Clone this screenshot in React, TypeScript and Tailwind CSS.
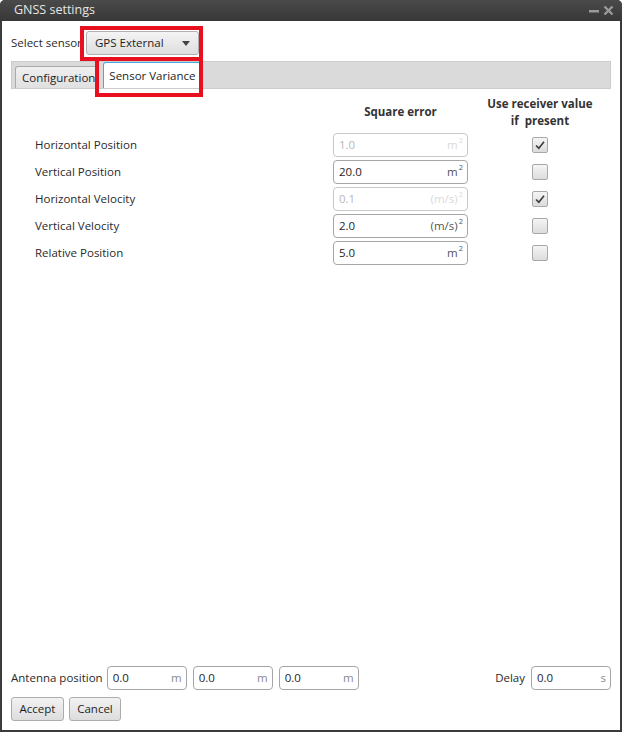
import React from "react";

type Unit = "m2" | "ms2" | "m" | "s";

interface SensorRow {
  label: string;
  value: string;
  unit: Unit;
  useReceiver: boolean;
}

const rows: SensorRow[] = [
  { label: "Horizontal Position", value: "1.0", unit: "m2", useReceiver: true },
  { label: "Vertical Position", value: "20.0", unit: "m2", useReceiver: false },
  { label: "Horizontal Velocity", value: "0.1", unit: "ms2", useReceiver: true },
  { label: "Vertical Velocity", value: "2.0", unit: "ms2", useReceiver: false },
  { label: "Relative Position", value: "5.0", unit: "m2", useReceiver: false },
];

// 单位显示，平方用上标
const UnitLabel = ({ unit }: { unit: Unit }) => {
  if (unit === "m" || unit === "s") return <span>{unit}</span>;
  return (
    <span className="flex items-start">
      <span>{unit === "m2" ? "m" : "(m/s)"}</span>
      <span className="text-[7.5px] leading-none mt-[1px] ml-[1px]">2</span>
    </span>
  );
};

const NumberField = ({
  value,
  unit,
  disabled = false,
  width = "w-[135px]",
}: {
  value: string;
  unit: Unit;
  disabled?: boolean;
  width?: string;
}) => (
  <div
    className={`${width} h-[24px] flex items-center justify-between pl-[5px] pr-[4px] rounded-[4px] border bg-white ${
      disabled ? "border-[#c9c9c9]" : "border-[#a6a6a6]"
    }`}
  >
    <span className={disabled ? "text-[#b8b8b8]" : "text-[#1e1e1e]"}>{value}</span>
    <span className={disabled ? "text-[#dadada]" : unit === "m" || unit === "s" ? "text-[#8a8a8a]" : "text-[#555]"}>
      <UnitLabel unit={unit} />
    </span>
  </div>
);

const CheckBox = ({ checked }: { checked: boolean }) => (
  <div className="w-[16px] h-[16px] rounded-[2px] border border-[#a8a8a8] bg-gradient-to-b from-[#f5f5f5] to-[#dcdcdc] flex items-center justify-center">
    {checked && (
      <svg width="12" height="12" viewBox="0 0 12 12">
        <polyline points="2,6.5 4.8,9.2 10,2.8" fill="none" stroke="#3c3c3c" strokeWidth="1.6" />
      </svg>
    )}
  </div>
);

const Button = ({ children, width }: { children: React.ReactNode; width: string }) => (
  <button
    className={`${width} h-[24px] rounded-[3px] border border-[#acacac] bg-gradient-to-b from-[#f2f2f2] to-[#dddddd] text-[#1e1e1e] flex items-center justify-center`}
  >
    {children}
  </button>
);

export default function App() {
  return (
    <div
      className="w-[622px] h-[732px] flex flex-col bg-[#3b3b3b] rounded-t-[5px] text-[11.5px] text-[#2a2a2a]"
      style={{ fontFamily: '"Open Sans", "Noto Sans", sans-serif' }}
    >
      {/* 标题栏 */}
      <div className="h-[21px] flex items-center justify-between pl-[14px] pr-[8px] bg-gradient-to-b from-[#4a4a4a] to-[#383838] rounded-t-[5px]">
        <span className="text-[12.5px] text-[#e6e6e6]">GNSS settings</span>
        <div className="flex items-center gap-[4px] text-[#9a9a9a]">
          <svg width="10" height="10" viewBox="0 0 10 10">
            <rect x="0" y="4" width="10" height="2.5" fill="currentColor" />
          </svg>
          <svg width="11" height="11" viewBox="0 0 11 11">
            <path d="M1.5 1.5 L9.5 9.5 M9.5 1.5 L1.5 9.5" stroke="currentColor" strokeWidth="2.4" />
          </svg>
        </div>
      </div>

      {/* 窗口内容 */}
      <div className="flex-1 flex flex-col bg-white mx-[2px] mb-[2px] pl-[9px] pr-[9px] relative">
        {/* 传感器选择 */}
        <div className="flex items-center mt-[10px] h-[24px]">
          <span className="w-[75px]">Select sensor</span>
          <div className="w-[113px] h-[24px] rounded-[3px] border border-[#b0b0b0] bg-gradient-to-b from-[#f4f4f4] to-[#dedede] flex items-center justify-between pl-[8px] pr-[8px]">
            <span className="text-[#1e1e1e]">GPS External</span>
            <svg width="8" height="5" viewBox="0 0 8 5">
              <polygon points="0,0 8,0 4,5" fill="#444" />
            </svg>
          </div>
        </div>

        {/* 标签页 */}
        <div className="mt-[6px] h-[28px] bg-[#dadada] border border-[#cccccc] flex items-end pl-[3px] gap-[4px]">
          <div className="h-[22px] pl-[6px] pr-[3px] flex items-center rounded-t-[3px] border border-b-0 border-[#ababab] bg-gradient-to-b from-[#f0f0f0] to-[#e0e0e0] text-[#1e1e1e]">
            Configuration
          </div>
          <div className="h-[26px] px-[5px] flex items-center rounded-t-[3px] border border-b-0 border-[#49a6e0] bg-white text-[#1e1e1e]">
            Sensor Variance
          </div>
        </div>

        {/* 方差表格 */}
        <div className="ml-[24px] mt-[6px] grid grid-cols-[298px_135px_144px]">
          <div />
          <div className="h-[34px] flex items-center justify-center font-bold text-[#333]">Square error</div>
          <div className="h-[34px] flex flex-col items-center justify-center font-bold text-[#333] leading-[17px]">
            <span>Use receiver value</span>
            <span>if&nbsp; present</span>
          </div>
        </div>
        <div className="ml-[24px] mt-[4px] flex flex-col gap-[3px]">
          {rows.map((row) => (
            <div key={row.label} className="grid grid-cols-[298px_135px_144px] h-[24px] items-center">
              <span>{row.label}</span>
              <NumberField value={row.value} unit={row.unit} disabled={row.useReceiver} />
              <div className="flex justify-center">
                <CheckBox checked={row.useReceiver} />
              </div>
            </div>
          ))}
        </div>

        <div className="flex-1" />

        {/* 天线位置与延迟 */}
        <div className="flex items-center h-[24px]">
          <span className="mr-[4px]">Antenna position</span>
          <div className="flex gap-[6px]">
            <NumberField value="0.0" unit="m" width="w-[80px]" />
            <NumberField value="0.0" unit="m" width="w-[80px]" />
            <NumberField value="0.0" unit="m" width="w-[80px]" />
          </div>
          <div className="flex-1" />
          <span className="mr-[6px]">Delay</span>
          <NumberField value="0.0" unit="s" width="w-[80px]" />
        </div>

        <div className="flex gap-[5px] mt-[7px] mb-[9px]">
          <Button width="w-[53px]">Accept</Button>
          <Button width="w-[52px]">Cancel</Button>
        </div>

        {/* 标注框 */}
        <div className="absolute left-[78px] top-[5px] w-[123px] h-[35px] border-[4px] border-[#e8101e] pointer-events-none" />
        <div className="absolute left-[93px] top-[40px] w-[108px] h-[36px] border-[4px] border-[#e8101e] border-t-0 pointer-events-none" />
      </div>
    </div>
  );
}
